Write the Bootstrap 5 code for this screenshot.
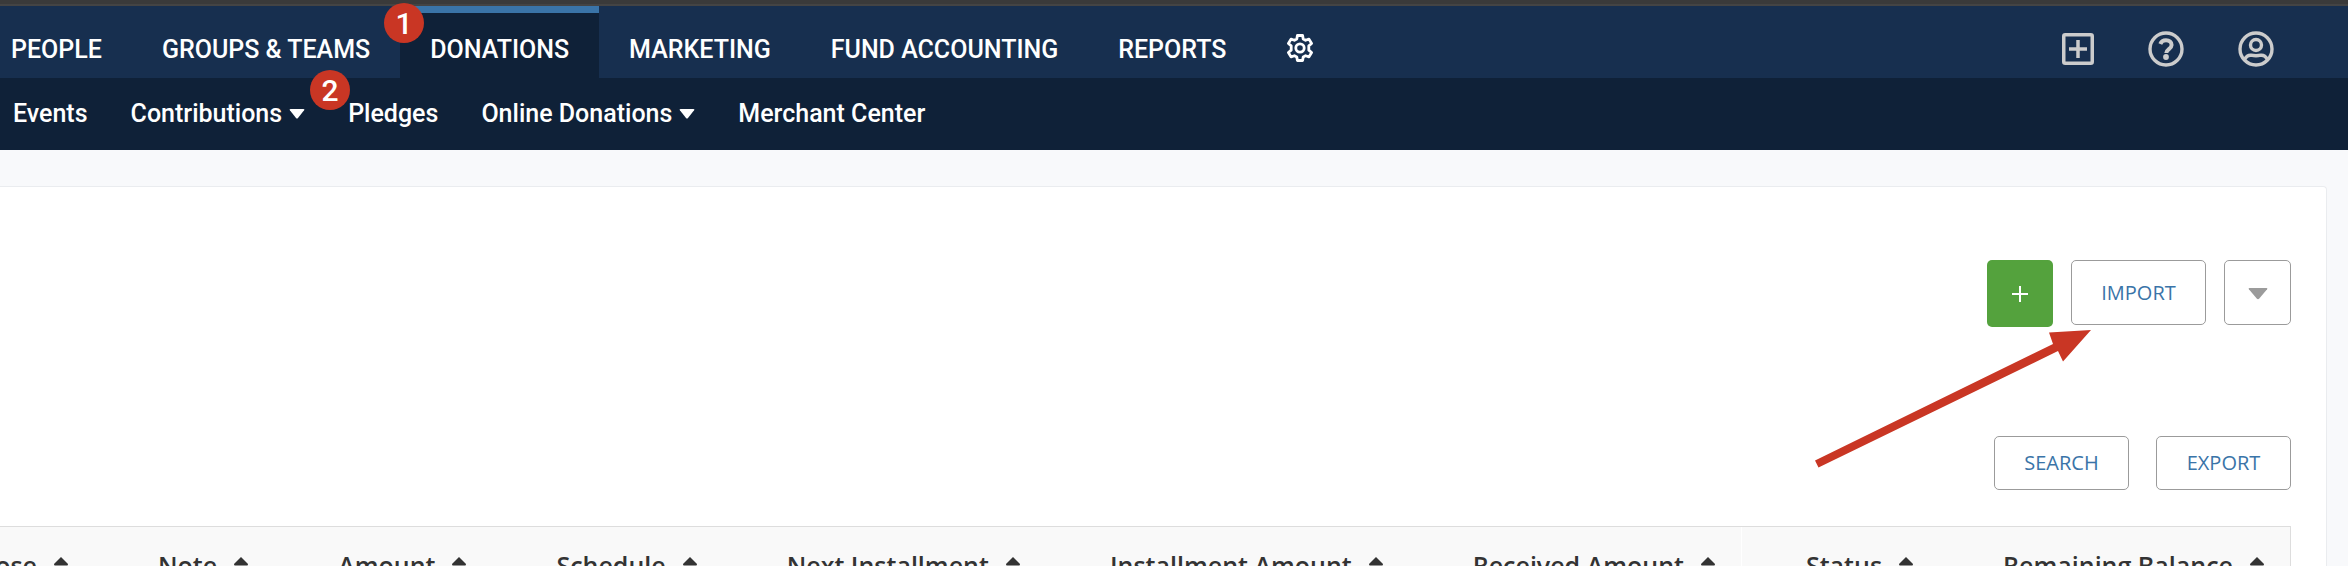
<!DOCTYPE html>
<html lang="en">
<head>
<meta charset="utf-8">
<meta name="viewport" content="width=device-width, initial-scale=1">
<title>Pledges</title>
<link href="https://cdn.jsdelivr.net/npm/bootstrap@5.3.0/dist/css/bootstrap.min.css" rel="stylesheet">
<style>
  body { background: #f8f9fb; font-family: "Open Sans", sans-serif; color: #333; }
  .window-edge { height: 6px; flex: none; background: #3a3a3a; border-bottom: 2px solid #444; }
  .main-bar { background: #172f4f; }
  .sub-bar { background: #0f2138; padding-left: 13px; }
  .main-bar, .sub-bar { height: 72px; font-family: Roboto, sans-serif; font-size: 25px; line-height: 32px; font-weight: 500; }
  .main-bar .nav-link, .sub-bar .nav-link { color: #fff; padding: 0; white-space: nowrap; }
  .main-bar .nav-link { padding: 28px 30px 12px; }
  .main-bar .nav-item:first-child .nav-link { padding-left: 11px; }
  .main-bar .nav-link.active { background: #0f2138; border-top: 7px solid #3a74a8; padding-top: 21px; }
  .sub-bar .nav { gap: 43px; }
  .sub-bar .nav-link { padding-top: 20px; }
  .tri { margin-left: 7px; }
  .tools { gap: 54px; padding: 13px 74px 0 0; }
  .step { position: absolute; width: 40px; height: 40px; border-radius: 50%; background: #c93624; color: #fff;
          font: 500 30px/42px Roboto, sans-serif; text-align: center; z-index: 2; }
  .step-tab { left: -16px; top: -3px; }
  .step-sub { left: -38px; top: -8px; }
  .panel { margin: 36px 21px 0 0; min-height: 0; background: #fff; border: 1px solid #eaecef; border-left: 0; border-bottom: 0; border-top-right-radius: 4px; padding: 73px 35px 0 0; }
  .btn-line, .btn-plus { border-radius: 5px; font-size: 20px; line-height: 24px; }
  .btn-line { border: 1px solid #9b9b9b; color: #3a74a8; background: #fff; padding: 14px 0; width: 135px; }
  .btn-plus { background: #54a23d; color: #fff; width: 66px; height: 67px; }
  .btn-tall { height: 65px; }
  .btn-drop { width: 67px; }
  .row-main { gap: 18px; }
  .row-list { gap: 27px; margin-top: 109px; }
  .pointer { position: absolute; right: 196px; top: 65px; }
  .list-wrap { margin-top: 36px; border-top: 1px solid #ddd; border-right: 1px solid #ddd; overflow: hidden; }
  .list-head { width: auto; flex: none; background: #f9f9f9; }
  .list-head th { padding: 21px 26px 21px 64px; font-size: 25px; line-height: 34px; font-weight: 600; white-space: nowrap; }
  .list-head svg { margin-left: 17px; vertical-align: 9px; }
  .split { border-right: 1px solid #fff; }
</style>
</head>
<body class="vh-100 overflow-hidden d-flex flex-column">
<div class="window-edge"></div>
<header>
  <nav class="main-bar d-flex justify-content-between" aria-label="Main">
    <ul class="nav flex-nowrap">
      <li class="nav-item"><a class="nav-link" href="#">PEOPLE</a></li>
      <li class="nav-item"><a class="nav-link" href="#">GROUPS &amp; TEAMS</a></li>
      <li class="nav-item position-relative"><a class="nav-link active" href="#">DONATIONS</a><span class="step step-tab">1</span></li>
      <li class="nav-item"><a class="nav-link" href="#">MARKETING</a></li>
      <li class="nav-item"><a class="nav-link" href="#">FUND ACCOUNTING</a></li>
      <li class="nav-item"><a class="nav-link" href="#">REPORTS</a></li>
      <li class="nav-item"><a class="nav-link d-flex align-items-start" href="#" aria-label="Settings">
        <svg width="28" height="28" viewBox="0 0 28 28" fill="none" stroke="#fff" stroke-width="2.8" stroke-linejoin="round"><path d="M11.400 1.500h5.200l.6 3.500 2.400 1.300 3.400-1.200 2.600 4.400-2.800 2.300v4.400l2.800 2.300-2.600 4.400-3.400-1.200-2.400 1.300-.6 3.500h-5.200l-.6-3.500-2.400-1.300-3.400 1.200-2.600-4.400 2.800-2.300v-4.400L2.400 9.500 5 5.100l3.400 1.200L10.800 5z"/><circle cx="14" cy="14" r="4.200"/></svg></a></li>
    </ul>
    <div class="tools d-flex align-items-center">
      <a href="#" class="d-flex" aria-label="Add"><svg width="32" height="32" viewBox="0 0 32 32" fill="none" stroke="#ccc" stroke-width="3.500"><rect x="1.750" y="1.750" width="28.500" height="28.500" rx="1.500"/><path d="M16 7v18M7 16h18"/></svg></a>
      <a href="#" class="d-flex" aria-label="Help"><svg width="36" height="36" viewBox="0 0 36 36" fill="none" stroke="#ccc"><circle cx="18" cy="18" r="16" stroke-width="3.400"/><path d="M12.300 13c1-2.500 3-3.700 5.700-3.700 3.400 0 5.600 1.800 5.600 4.600 0 4-5.300 4.300-5.300 8.100" stroke-width="4"/><circle cx="18" cy="26" r="2.900" fill="#ccc" stroke="none"/></svg></a>
      <a href="#" class="d-flex" aria-label="Account"><svg width="36" height="36" viewBox="0 0 36 36" fill="none" stroke="#ccc" stroke-width="3.400"><circle cx="18" cy="18" r="16"/><circle cx="18" cy="14" r="5.500"/><path d="M6.500 28.500c1.800-3.300 4.200-4.500 6.500-4.300 3 .6 7 .6 10 0 2.300-.2 4.700 1 6.500 4.300"/></svg></a>
    </div>
  </nav>
  <nav class="sub-bar" aria-label="Donations">
    <ul class="nav flex-nowrap">
      <li class="nav-item"><a class="nav-link" href="#">Events</a></li>
      <li class="nav-item"><a class="nav-link d-flex align-items-center" href="#">Contributions<svg class="tri" width="16" height="10" viewBox="0 0 16 10"><path d="M1.500 0h13q1.500 0 .6 1.200L9 9q-1 1.200-2 0L.9 1.200Q0 0 1.500 0z" fill="#fff"/></svg></a></li>
      <li class="nav-item position-relative"><a class="nav-link" href="#">Pledges</a><span class="step step-sub">2</span></li>
      <li class="nav-item"><a class="nav-link d-flex align-items-center" href="#">Online Donations<svg class="tri" width="16" height="10" viewBox="0 0 16 10"><path d="M1.500 0h13q1.500 0 .6 1.200L9 9q-1 1.200-2 0L.9 1.200Q0 0 1.500 0z" fill="#fff"/></svg></a></li>
      <li class="nav-item"><a class="nav-link" href="#">Merchant Center</a></li>
    </ul>
  </nav>
</header>
<main class="panel flex-fill overflow-hidden">
  <div class="row-main d-flex justify-content-end align-items-start position-relative">
    <button type="button" class="btn btn-plus p-0 d-flex align-items-center justify-content-center" aria-label="Add pledge"><svg width="16" height="16" viewBox="0 0 16 16" stroke="#fff" stroke-width="2"><path d="M8 0v16M0 8h16"/></svg></button>
    <button type="button" class="btn btn-line btn-tall">IMPORT</button>
    <button type="button" class="btn btn-line btn-tall btn-drop" aria-label="More actions"><svg width="20" height="12" viewBox="0 0 20 12"><path d="M1.500 0h17q1.500 0 .6 1.300L11.300 10.500q-1.300 1.500-2.600 0L.9 1.300Q0 0 1.500 0z" fill="#9b9b9b"/></svg></button>
    <svg class="pointer" width="285" height="145" viewBox="0 0 285 145" fill="#c93624"><path d="M5 135.500L243 19l-4-11.500L281 5l-28 31.500L248 26 8.500 142.500z"/></svg>
  </div>
  <div class="row-list d-flex justify-content-end">
    <button type="button" class="btn btn-line">SEARCH</button>
    <button type="button" class="btn btn-line">EXPORT</button>
  </div>
  <div class="list-wrap d-flex justify-content-end">
    <table class="list-head">
      <thead><tr>
        <th scope="col">Purpose<svg width="14" height="9"><path d="M7 0l7 7q0 1.500-1 1.500H1Q0 8.500 0 7z" fill="#333"/></svg></th>
        <th scope="col">Note<svg width="14" height="9"><path d="M7 0l7 7q0 1.500-1 1.500H1Q0 8.500 0 7z" fill="#333"/></svg></th>
        <th scope="col">Amount<svg width="14" height="9"><path d="M7 0l7 7q0 1.500-1 1.500H1Q0 8.500 0 7z" fill="#333"/></svg></th>
        <th scope="col">Schedule<svg width="14" height="9"><path d="M7 0l7 7q0 1.500-1 1.500H1Q0 8.500 0 7z" fill="#333"/></svg></th>
        <th scope="col">Next Installment<svg width="14" height="9"><path d="M7 0l7 7q0 1.500-1 1.500H1Q0 8.500 0 7z" fill="#333"/></svg></th>
        <th scope="col">Installment Amount<svg width="14" height="9"><path d="M7 0l7 7q0 1.500-1 1.500H1Q0 8.500 0 7z" fill="#333"/></svg></th>
        <th scope="col" class="split">Received Amount<svg width="14" height="9"><path d="M7 0l7 7q0 1.500-1 1.500H1Q0 8.500 0 7z" fill="#333"/></svg></th>
        <th scope="col">Status<svg width="14" height="9"><path d="M7 0l7 7q0 1.500-1 1.500H1Q0 8.500 0 7z" fill="#333"/></svg></th>
        <th scope="col">Remaining Balance<svg width="14" height="9"><path d="M7 0l7 7q0 1.500-1 1.500H1Q0 8.500 0 7z" fill="#333"/></svg></th>
      </tr></thead>
    </table>
  </div>
</main>
<script src="https://cdn.jsdelivr.net/npm/bootstrap@5.3.0/dist/js/bootstrap.bundle.min.js"></script>
</body>
</html>
